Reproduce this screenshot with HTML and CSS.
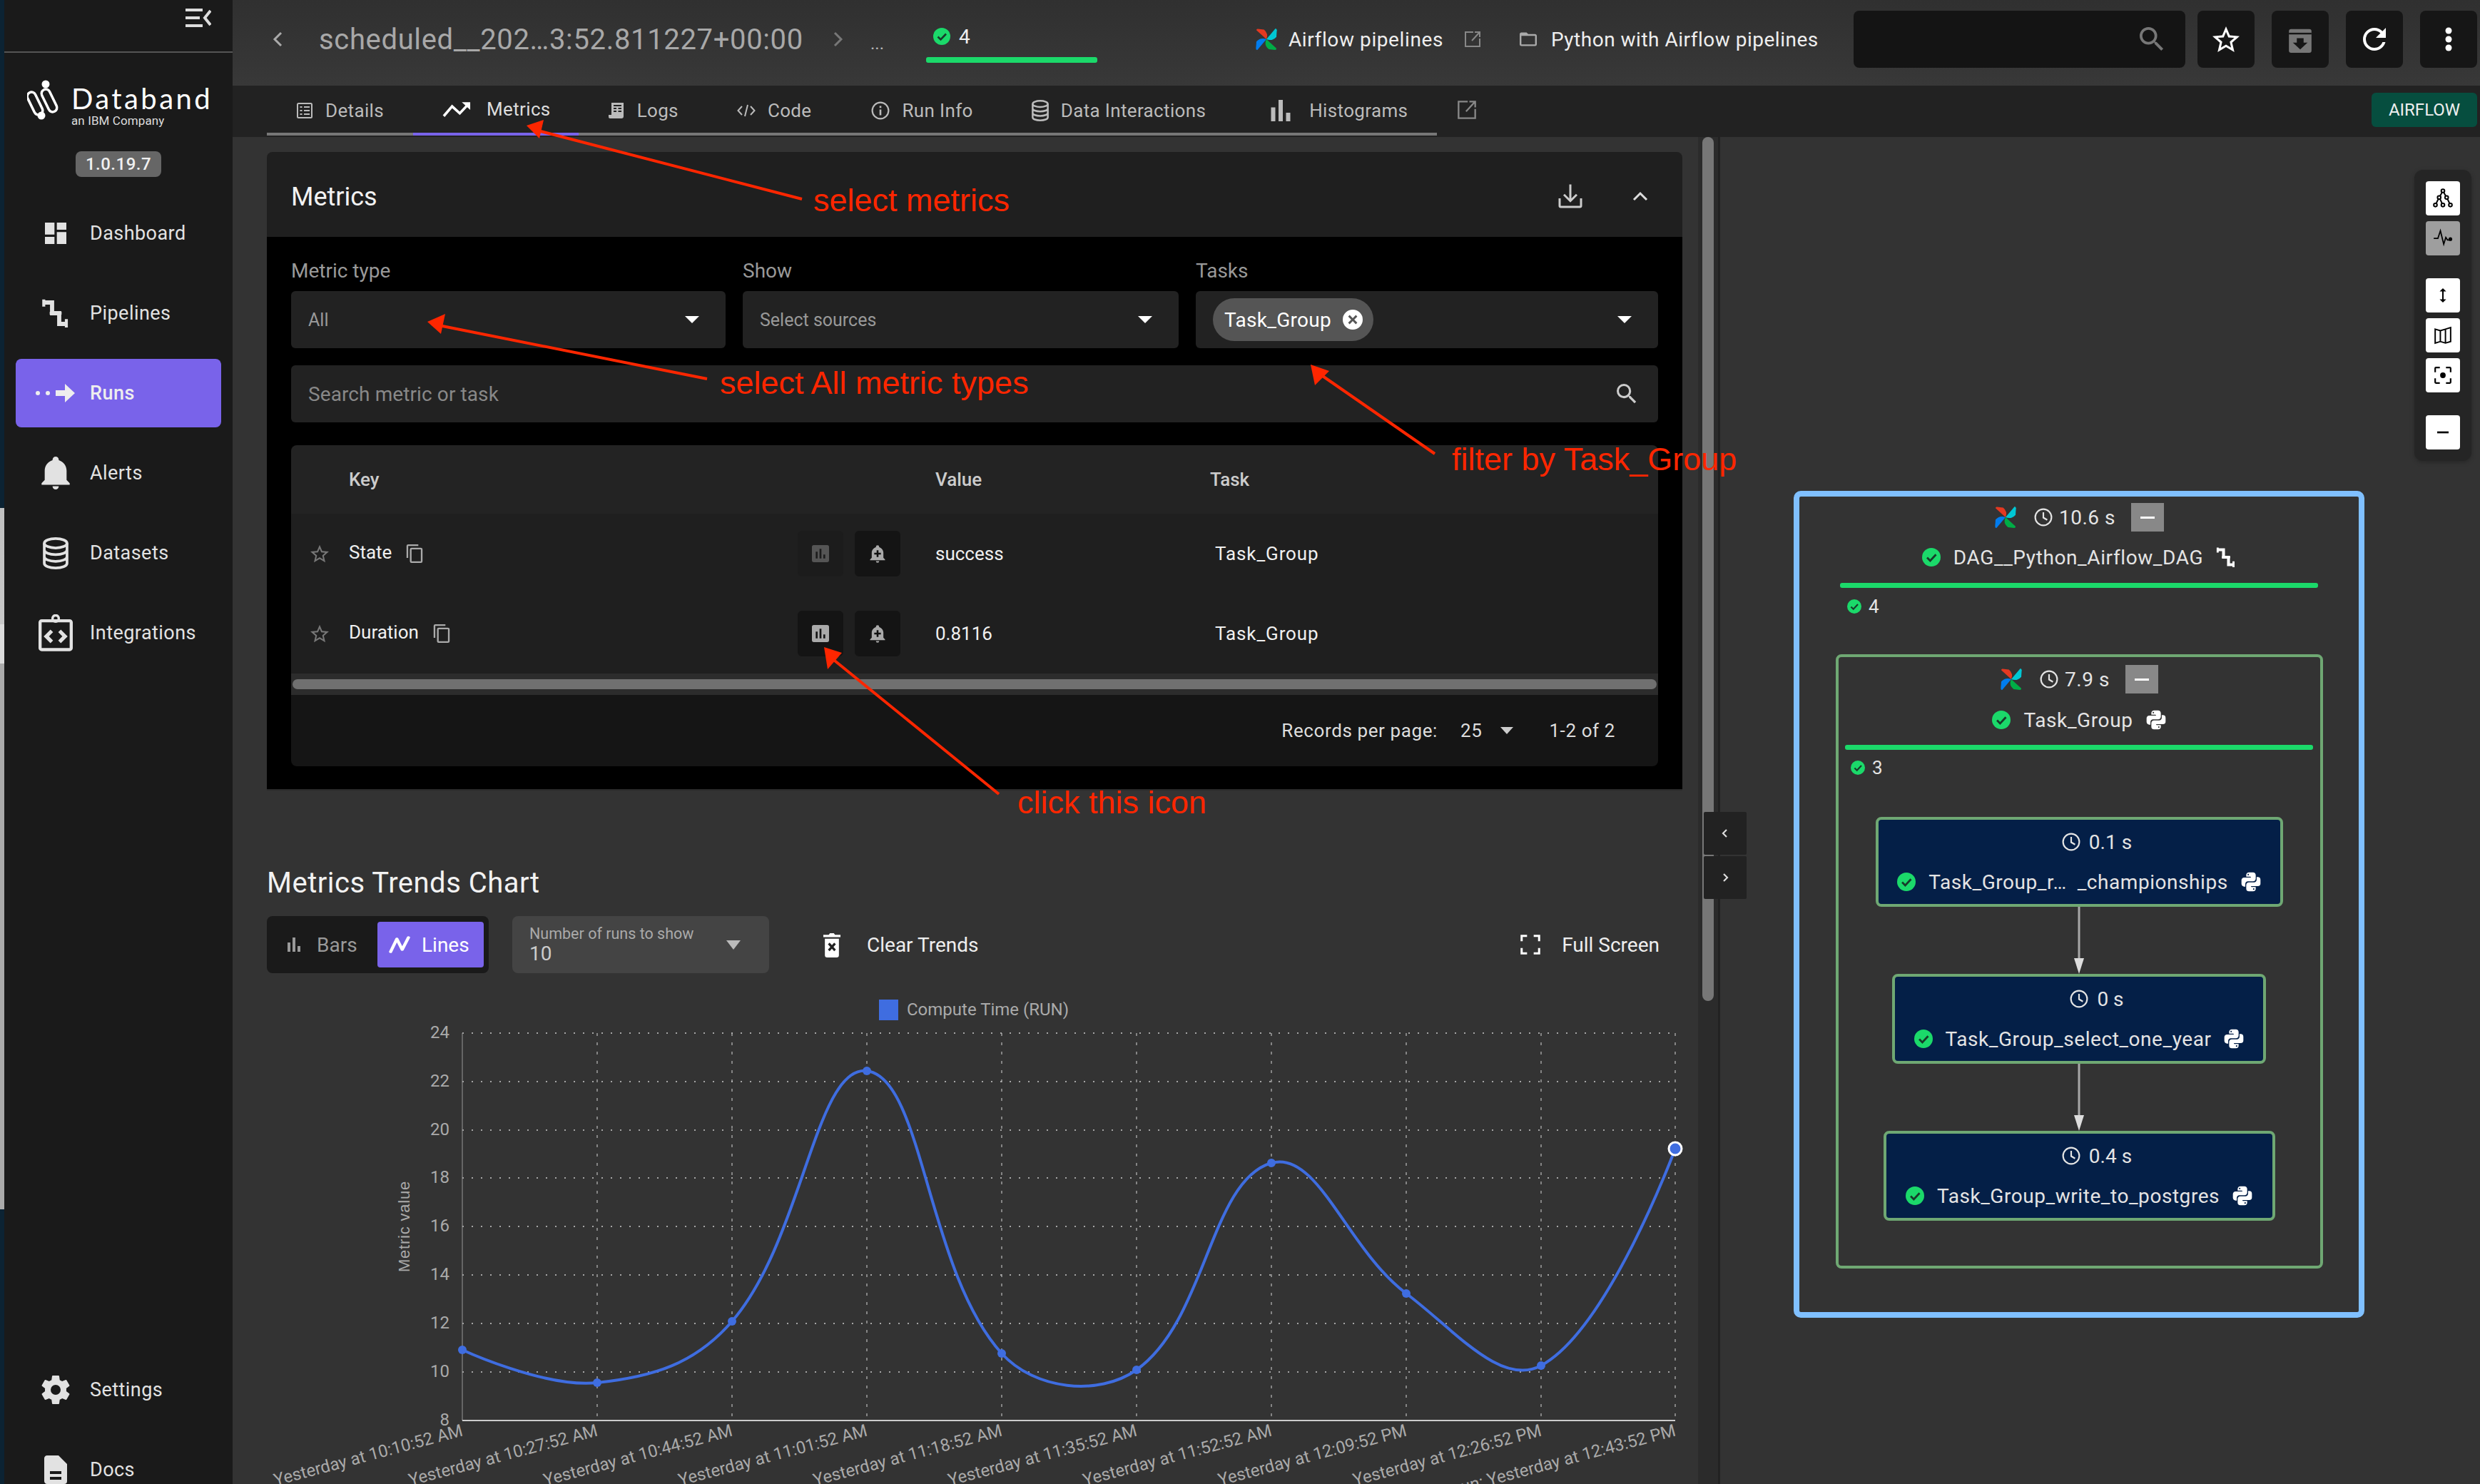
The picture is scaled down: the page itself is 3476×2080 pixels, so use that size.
FILE: index.html
```html
<!DOCTYPE html>
<html lang="en">
<head>
<meta charset="utf-8">
<title>Databand - Metrics</title>
<link rel="stylesheet" href="styles.css">
</head>
<body>
<svg class="sprite" width="0" height="0" aria-hidden="true">
  <defs>
    <symbol id="i-check" viewBox="0 0 24 24"><circle cx="12" cy="12" r="12" fill="#1bd96a"/><path d="M6.500 12.500l4 4 7.500-8" fill="none" stroke="#173a2a" stroke-width="2.600"/></symbol>
    <symbol id="i-airflow" viewBox="0 0 24 24">
      <path fill="#e43921" d="M12 12 1.500 2.500Q1.500 1 3 1.200L9.500 1.800Q14.500 6 12 12Z"/>
      <path fill="#00c7d4" d="M12 12 21.500 .8Q23 1 23 2.500L22.500 9.500Q18 14.500 12 12Z"/>
      <path fill="#00ad46" d="M12 12 22.500 21.500Q22.500 23.500 21 23.200L14.500 22.500Q9 18 12 12Z"/>
      <path fill="#017cee" d="M12 12 2.500 23.200Q1 23.500 1 21.500L1.500 14.500Q6 9.500 12 12Z"/>
    </symbol>
    <symbol id="i-python" viewBox="2 2 20 21"><path fill="#fff" d="M19.140 7.500A2.860 2.860 0 0 1 22 10.360V14.140A2.860 2.860 0 0 1 19.140 17H12C12 17.390 12.320 17.960 12.710 17.960H17V19.640A2.860 2.860 0 0 1 14.140 22.500H9.860A2.860 2.860 0 0 1 7 19.640V15.890C7 14.310 8.280 13.040 9.860 13.040H15.110C16.690 13.040 17.960 11.760 17.960 10.180V7.500H19.140M14.860 19.290C14.460 19.290 14.140 19.590 14.140 20.180C14.140 20.770 14.460 20.890 14.860 20.890A.71 .71 0 0 0 15.570 20.180C15.570 19.590 15.250 19.290 14.860 19.290M4.860 17.500C3.280 17.500 2 16.220 2 14.640V10.860C2 9.280 3.280 8 4.860 8H12C12 7.610 11.680 7.040 11.290 7.040H7V5.360C7 3.780 8.280 2.500 9.860 2.500H14.140C15.720 2.500 17 3.780 17 5.360V9.110C17 10.690 15.720 11.960 14.140 11.960H8.890C7.310 11.960 6.040 13.240 6.040 14.820V17.500H4.860M9.140 5.710C9.540 5.710 9.860 5.410 9.860 4.820C9.860 4.230 9.540 4.110 9.140 4.110C8.750 4.110 8.430 4.230 8.430 4.820C8.430 5.410 8.750 5.710 9.140 5.710Z"/></symbol>
    <symbol id="i-clock" viewBox="0 0 24 24"><circle cx="12" cy="12" r="10.500" fill="none" stroke="currentColor" stroke-width="2"/><path d="M12 5.500v7l5 3" fill="none" stroke="currentColor" stroke-width="2"/></symbol>
    <symbol id="i-pipe" viewBox="0 0 24 24"><path d="M2 3h7v9h6v9h6" fill="none" stroke="currentColor" stroke-width="3.500"/><path d="M2 .5v6M21 17v7M7 12h10" fill="none" stroke="currentColor" stroke-width="2.500"/></symbol>
    <symbol id="i-dash" viewBox="3 3 18 18"><path fill="currentColor" d="M13 3V9H21V3M13 21H21V11H13M3 21H11V15H3M3 13H11V3H3V13Z"/></symbol>
    <symbol id="i-bell" viewBox="3 2 18 21"><path fill="currentColor" d="M21 19V20H3V19L5 17V11C5 7.900 7.030 5.170 10 4.290C10 4.190 10 4.100 10 4A2 2 0 0 1 12 2A2 2 0 0 1 14 4C14 4.100 14 4.190 14 4.290C16.970 5.170 19 7.900 19 11V17L21 19M14 21A2 2 0 0 1 12 23A2 2 0 0 1 10 21"/></symbol>
    <symbol id="i-bellplus" viewBox="0 0 24 24"><path fill="currentColor" d="M21 19V20H3V19L5 17V11C5 7.900 7.030 5.170 10 4.290C10 4.190 10 4.100 10 4A2 2 0 0 1 12 2A2 2 0 0 1 14 4C14 4.100 14 4.190 14 4.290C16.970 5.170 19 7.900 19 11V17L21 19M14 21A2 2 0 0 1 12 23A2 2 0 0 1 10 21"/><path d="M12 8v8M8 12h8" stroke="#111" stroke-width="2.200"/></symbol>
    <symbol id="i-db" viewBox="2.500 0 19 24"><g fill="none" stroke="currentColor" stroke-width="2"><ellipse cx="12" cy="4.500" rx="8.500" ry="3.500"/><path d="M3.500 4.500v15c0 2 3.800 3.500 8.500 3.500s8.500-1.500 8.500-3.500v-15M3.500 9.500c0 2 3.800 3.500 8.500 3.500s8.500-1.500 8.500-3.500M3.500 14.500c0 2 3.800 3.500 8.500 3.500s8.500-1.500 8.500-3.500"/></g></symbol>
    <symbol id="i-integr" viewBox="1 .5 22 23.500"><path d="M3 4.500h18a1 1 0 0 1 1 1V22a1 1 0 0 1-1 1H3a1 1 0 0 1-1-1V5.500a1 1 0 0 1 1-1z" fill="none" stroke="currentColor" stroke-width="2"/><circle cx="12" cy="3" r="2" fill="none" stroke="currentColor" stroke-width="1.600"/><path d="M9.500 11l-3.500 3.500 3.500 3.500M14.500 11l3.500 3.500-3.500 3.500" fill="none" stroke="currentColor" stroke-width="2.400"/></symbol>
    <symbol id="i-cog" viewBox="2 2 20 20"><path fill="currentColor" d="M12 15.500A3.500 3.500 0 0 1 8.500 12A3.500 3.500 0 0 1 12 8.500A3.500 3.500 0 0 1 15.500 12A3.500 3.500 0 0 1 12 15.500M19.430 12.970C19.470 12.650 19.500 12.330 19.500 12C19.500 11.670 19.470 11.340 19.430 11L21.540 9.370C21.730 9.220 21.780 8.950 21.660 8.730L19.660 5.270C19.540 5.050 19.270 4.960 19.050 5.050L16.560 6.050C16.040 5.660 15.500 5.320 14.870 5.070L14.500 2.420C14.460 2.180 14.250 2 14 2H10C9.750 2 9.540 2.180 9.500 2.420L9.130 5.070C8.500 5.320 7.960 5.660 7.440 6.050L4.950 5.050C4.730 4.960 4.460 5.050 4.340 5.270L2.340 8.730C2.210 8.950 2.270 9.220 2.460 9.370L4.570 11C4.530 11.340 4.500 11.670 4.500 12C4.500 12.330 4.530 12.650 4.570 12.970L2.460 14.630C2.270 14.780 2.210 15.050 2.340 15.270L4.340 18.730C4.460 18.950 4.730 19.030 4.950 18.950L7.440 17.940C7.960 18.340 8.500 18.680 9.130 18.930L9.500 21.580C9.540 21.820 9.750 22 10 22H14C14.250 22 14.460 21.820 14.500 21.580L14.870 18.930C15.500 18.670 16.040 18.340 16.560 17.940L19.050 18.950C19.270 19.030 19.540 18.950 19.660 18.730L21.660 15.270C21.780 15.050 21.730 14.780 21.540 14.630L19.430 12.970Z"/></symbol>
    <symbol id="i-doc" viewBox="4 2 16 20"><path fill="currentColor" fill-rule="evenodd" d="M6 2H14L20 8V20A2 2 0 0 1 18 22H6C4.890 22 4 21.100 4 20V4C4 2.890 4.890 2 6 2ZM8 13V15H16V13ZM8 17V19H16V17Z"/></symbol>
    <symbol id="i-search" viewBox="3 3 18 18"><path fill="currentColor" d="M9.500 3A6.500 6.500 0 0 1 16 9.500C16 11.110 15.410 12.590 14.440 13.730L14.710 14H15.500L20.500 19L19 20.500L14 15.500V14.710L13.730 14.440C12.590 15.410 11.110 16 9.500 16A6.500 6.500 0 0 1 3 9.500A6.500 6.500 0 0 1 9.500 3M9.500 5C7 5 5 7 5 9.500C5 12 7 14 9.500 14C12 14 14 12 14 9.500C14 7 12 5 9.500 5Z"/></symbol>
    <symbol id="i-star" viewBox="2 2 20 19"><path fill="currentColor" d="M12 15.390L8.240 17.660L9.230 13.380L5.910 10.500L10.290 10.130L12 6.090L13.710 10.130L18.090 10.500L14.770 13.380L15.760 17.660M22 9.240L14.810 8.630L12 2L9.190 8.620L2 9.240L7.450 13.970L5.820 21L12 17.270L18.180 21L16.540 13.970L22 9.240Z"/></symbol>
    <symbol id="i-refresh" viewBox="4 4 16 16"><path fill="currentColor" d="M17.650 6.350C16.200 4.900 14.210 4 12 4A8 8 0 0 0 4 12A8 8 0 0 0 12 20C15.730 20 18.840 17.450 19.730 14H17.650C16.830 16.330 14.610 18 12 18A6 6 0 0 1 6 12A6 6 0 0 1 12 6C13.660 6 15.140 6.690 16.220 7.780L13 11H20V4L17.650 6.350Z"/></symbol>
    <symbol id="i-dots" viewBox="0 0 24 24"><circle cx="12" cy="4" r="3" fill="currentColor"/><circle cx="12" cy="12" r="3" fill="currentColor"/><circle cx="12" cy="20" r="3" fill="currentColor"/></symbol>
    <symbol id="i-archive" viewBox="0 0 24 24"><path fill="currentColor" d="M4 3h16a2 2 0 0 1 2 2v17a2 2 0 0 1-2 2H4a2 2 0 0 1-2-2V5a2 2 0 0 1 2-2z"/><path d="M2 7h20" stroke="#161616" stroke-width="1.500"/><path d="M9 11h6v4h3.500L12 21l-6.500-6H9z" fill="#161616"/></symbol>
    <symbol id="i-ext" viewBox="0 0 24 24"><path d="M13 2H2v20h20V11M22 2 11 14M15 2h7v7" fill="none" stroke="currentColor" stroke-width="2"/></symbol>
    <symbol id="i-folder" viewBox="2 4 20 16"><path fill="currentColor" d="M20 18H4V8H20M20 6H12L10 4H4C2.890 4 2 4.890 2 6V18A2 2 0 0 0 4 20H20A2 2 0 0 0 22 18V8C22 6.890 21.100 6 20 6Z"/></symbol>
    <symbol id="i-details" viewBox="0 0 24 24"><rect x="2" y="2" width="20" height="20" rx="1.500" fill="none" stroke="currentColor" stroke-width="2"/><path d="M5.500 7h3M5.500 12h3M5.500 17h3M11 7h8M11 12h8M11 17h8" stroke="currentColor" stroke-width="2.200"/></symbol>
    <symbol id="i-trend" viewBox="0 0 42 24"><path d="M2 22 14 8l11 10L38 4" fill="none" stroke="#fff" stroke-width="3.600"/><path d="M28 2h12v11z" fill="#fff"/></symbol>
    <symbol id="i-logs" viewBox="0 0 24 24"><path fill="currentColor" d="M5 1h17v19a3 3 0 0 1-3 3H3a2 2 0 0 1-2-2v-3h4z"/><path d="M8 5h11M8 9h4M14.500 9H19M8 13h4M14.500 13H19" stroke="#222" stroke-width="2"/></symbol>
    <symbol id="i-code" viewBox="0 0 26 24"><path d="M7 6 1.500 12 7 18M19 6l5.500 6-5.500 6M15 4l-4 16" fill="none" stroke="currentColor" stroke-width="2"/></symbol>
    <symbol id="i-info" viewBox="0 0 24 24"><circle cx="12" cy="12" r="10.500" fill="none" stroke="currentColor" stroke-width="2"/><path d="M12 10.500V18M12 6v2.500" stroke="currentColor" stroke-width="2.400"/></symbol>
    <symbol id="i-bars" viewBox="3 2 18 20"><path fill="currentColor" d="M3 22V9H7V22H3M10 22V2H14V22H10M17 22V14H21V22H17Z"/></symbol>
    <symbol id="i-poll" viewBox="3 3 18 18"><path fill="currentColor" fill-rule="evenodd" d="M5 3H19A2 2 0 0 1 21 5V19A2 2 0 0 1 19 21H5A2 2 0 0 1 3 19V5A2 2 0 0 1 5 3ZM7 10V17H9V10ZM11 7V17H13V7ZM15 13V17H17V13Z"/></symbol>
    <symbol id="i-copy" viewBox="2 1 19 22"><path fill="currentColor" d="M19 21H8V7H19M19 5H8A2 2 0 0 0 6 7V21A2 2 0 0 0 8 23H19A2 2 0 0 0 21 21V7A2 2 0 0 0 19 5M16 1H4A2 2 0 0 0 2 3V17H4V3H16V1Z"/></symbol>
    <symbol id="i-down" viewBox="0 0 24 24"><path d="M12 1v15M6 10.500l6 6 6-6M2 14v7a1 1 0 0 0 1 1h18a1 1 0 0 0 1-1v-7" fill="none" stroke="currentColor" stroke-width="2"/></symbol>
    <symbol id="i-closec" viewBox="0 0 24 24"><path fill="#fff" fill-rule="evenodd" d="M12 0a12 12 0 1 1 0 24 12 12 0 0 1 0-24zM8.300 6.500 6.500 8.300 10.200 12l-3.700 3.700 1.800 1.800 3.700-3.700 3.700 3.700 1.800-1.800-3.700-3.700 3.700-3.700-1.800-1.800-3.700 3.700z"/></symbol>
    <symbol id="i-lines" viewBox="0 0 24 24" preserveAspectRatio="none"><path d="M2 22 9 4l6 15L22 2" fill="none" stroke="#fff" stroke-width="3.500" stroke-linejoin="round" stroke-linecap="round"/></symbol>
    <symbol id="i-trash" viewBox="0 0 24 32"><path fill="#fff" d="M1 3h7l1.500-2h5L16 3h7v3H1zM3 8h18v21a3 3 0 0 1-3 3H6a3 3 0 0 1-3-3z"/><path d="M8 14l8 9M16 14l-8 9" stroke="#222" stroke-width="3"/></symbol>
    <symbol id="i-frame" viewBox="0 0 24 24"><path d="M1.500 8V1.500H8M16 1.500h6.500V8M22.500 16v6.500H16M8 22.500H1.500V16" fill="none" stroke="#fff" stroke-width="2.600"/></symbol>
    <symbol id="i-tree" viewBox="0 0 24 24"><g fill="none" stroke="#000" stroke-width="1.700"><circle cx="12" cy="3" r="2"/><circle cx="7.500" cy="11" r="2"/><circle cx="16.500" cy="11" r="2"/><circle cx="3" cy="20" r="2"/><circle cx="12" cy="20" r="2"/><circle cx="21" cy="20" r="2"/><path d="M11 5 8.500 9.200M13 5l2.500 4.200M6.500 12.800 4 18M8.500 12.800 11 18M17.500 12.800 20 18"/></g></symbol>
    <symbol id="i-pulse" viewBox="0 0 24 24"><path d="M1 12h5l3-9 4 16 2.500-8 2 3h3" fill="none" stroke="#000" stroke-width="1.500"/><circle cx="21" cy="13" r="2.200" fill="#000"/></symbol>
    <symbol id="i-updown" viewBox="0 0 24 24"><path d="M12 3v18" stroke="#000" stroke-width="2.200"/><path d="M12 1l5 5H7zM12 23l-5-5h10z" fill="#000"/></symbol>
    <symbol id="i-map" viewBox="0 0 24 24"><path d="M2 4l6.700 2 6.600-2L22 2v18l-6.700 2-6.600-2L2 22zM8.700 6v14M15.300 4v18" fill="none" stroke="#000" stroke-width="1.800"/></symbol>
    <symbol id="i-focus" viewBox="0 0 24 24"><path d="M2 8V3a1 1 0 0 1 1-1h5M16 2h5a1 1 0 0 1 1 1v5M22 16v5a1 1 0 0 1-1 1h-5M8 22H3a1 1 0 0 1-1-1v-5" fill="none" stroke="#000" stroke-width="2"/><circle cx="12" cy="12" r="3.600" fill="#000"/></symbol>
    <symbol id="i-arrow" viewBox="0 0 20 94"><path d="M10 0V72" stroke="#a8a8a8" stroke-width="3"/><path d="M3 72H17L10 94z" fill="#ddd"/></symbol>
  </defs>
</svg>

<div class="strip"></div>

<aside class="sidebar">
  <div class="side-top">
    <svg class="collapse" viewBox="0 0 36 26"><path d="M0 2h24M0 13h20M0 24h24M35 3 27 13l8 10" fill="none" stroke="#ddd" stroke-width="4"/></svg>
  </div>
  <div class="brand">
    <svg class="brand-mark" viewBox="0 0 46 56">
      <g fill="none" stroke="#fff" stroke-width="3.500"><rect x="5" y="16" width="12" height="34" rx="6" transform="rotate(-26 11 33)"/><rect x="25" y="12" width="12" height="34" rx="6" transform="rotate(-26 31 29)"/></g>
      <circle cx="26" cy="6" r="5.500" fill="#fff"/><circle cx="20" cy="50" r="5.500" fill="#fff"/>
    </svg>
    <div class="brand-text">
      <div class="brand-name">Databand</div>
      <div class="brand-sub">an IBM Company</div>
    </div>
  </div>
  <div class="version">1.0.19.7</div>
  <nav class="nav">
    <a class="nav-item"><span class="nav-icon"><svg class="ic-30"><use href="#i-dash"/></svg></span>Dashboard</a>
    <a class="nav-item"><span class="nav-icon"><svg class="ic-40"><use href="#i-pipe"/></svg></span>Pipelines</a>
    <a class="nav-item nav-active"><span class="nav-icon"><svg class="runs-ic" viewBox="0 0 56 26"><circle cx="3" cy="13" r="3" fill="#eee"/><circle cx="17" cy="13" r="3" fill="#eee"/><path d="M28 9h13V0l14 13-14 13v-9H28z" fill="#eee"/></svg></span>Runs</a>
    <a class="nav-item"><span class="nav-icon"><svg class="ic-46"><use href="#i-bell"/></svg></span>Alerts</a>
    <a class="nav-item"><span class="nav-icon"><svg class="ic-db-nav"><use href="#i-db"/></svg></span>Datasets</a>
    <a class="nav-item"><span class="nav-icon"><svg class="ic-integr"><use href="#i-integr"/></svg></span>Integrations</a>
  </nav>
  <nav class="nav nav-bottom">
    <a class="nav-item"><span class="nav-icon"><svg class="ic-40"><use href="#i-cog"/></svg></span>Settings</a>
    <a class="nav-item"><span class="nav-icon"><svg class="ic-40"><use href="#i-doc"/></svg></span>Docs</a>
  </nav>
</aside>

<main class="main">
  <header class="topbar">
    <svg class="chev-back" viewBox="0 0 14 22"><path d="M12 2 3 11l9 9" fill="none" stroke="#aaa" stroke-width="3"/></svg>
    <div class="title">scheduled__202…3:52.811227+00:00</div>
    <svg class="chev-next" viewBox="0 0 14 22"><path d="M2 2l9 9-9 9" fill="none" stroke="#777" stroke-width="3"/></svg>
    <div class="ellipsis">...</div>
    <div class="status">
      <div class="status-row"><svg class="ic-24"><use href="#i-check"/></svg><span>4</span></div>
      <div class="status-bar"></div>
    </div>
    <svg class="af-logo"><use href="#i-airflow"/></svg>
    <div class="top-link top-link-a">Airflow pipelines</div>
    <svg class="ext-top"><use href="#i-ext"/></svg>
    <svg class="folder"><use href="#i-folder"/></svg>
    <div class="top-link top-link-b">Python with Airflow pipelines</div>
    <div class="top-search"><svg class="ic-34 dim"><use href="#i-search"/></svg></div>
    <div class="top-btn"><svg class="ic-38 white"><use href="#i-star"/></svg></div>
    <div class="top-btn"><svg class="ic-38 dim"><use href="#i-archive"/></svg></div>
    <div class="top-btn"><svg class="ic-32 white"><use href="#i-refresh"/></svg></div>
    <div class="top-btn"><svg class="ic-36 white"><use href="#i-dots"/></svg></div>
  </header>

  <div class="tabbar">
    <div class="tabs">
      <a class="tab"><svg class="ic-24"><use href="#i-details"/></svg>Details</a>
      <a class="tab tab-active"><svg class="ic-trend"><use href="#i-trend"/></svg>Metrics</a>
      <a class="tab"><svg class="ic-24"><use href="#i-logs"/></svg>Logs</a>
      <a class="tab tab-code"><svg class="ic-26"><use href="#i-code"/></svg>Code</a>
      <a class="tab"><svg class="ic-26"><use href="#i-info"/></svg>Run Info</a>
      <a class="tab tab-data"><svg class="ic-db-tab"><use href="#i-db"/></svg>Data Interactions</a>
      <a class="tab tab-hist"><svg class="ic-bars"><use href="#i-bars"/></svg>Histograms</a>
    </div>
    <svg class="ext-tab"><use href="#i-ext"/></svg>
    <div class="engine">AIRFLOW</div>
  </div>

  <div class="content">
    <section class="left">
      <div class="panel">
        <div class="panel-head">
          <h2 class="panel-title">Metrics</h2>
          <svg class="ic-36 light"><use href="#i-down"/></svg>
          <svg class="chev-up" viewBox="0 0 24 14"><path d="M3 12l9-9 9 9" fill="none" stroke="#ddd" stroke-width="3"/></svg>
        </div>
        <div class="panel-body">
          <div class="filters">
            <div class="filter">
              <label class="filter-label">Metric type</label>
              <div class="select"><span>All</span><i class="caret"></i></div>
            </div>
            <div class="filter">
              <label class="filter-label">Show</label>
              <div class="select"><span>Select sources</span><i class="caret"></i></div>
            </div>
            <div class="filter">
              <label class="filter-label">Tasks</label>
              <div class="select select-chip"><span class="chip">Task_Group<svg class="ic-28"><use href="#i-closec"/></svg></span><i class="caret"></i></div>
            </div>
          </div>
          <div class="search"><span>Search metric or task</span><svg class="ic-28 light"><use href="#i-search"/></svg></div>
          <div class="table">
            <div class="thead">
              <span class="th">Key</span>
              <span class="th">Value</span>
              <span class="th th-task">Task</span>
            </div>
            <div class="tr">
              <svg class="row-star"><use href="#i-star"/></svg>
              <div class="key"><span class="key-name">State</span><svg class="ic-copy"><use href="#i-copy"/></svg>
                <div class="row-actions">
                  <span class="act act-off"><svg class="ic-24"><use href="#i-poll"/></svg></span>
                  <span class="act"><svg class="ic-28 bell-ic"><use href="#i-bellplus"/></svg></span>
                </div>
              </div>
              <span class="val">success</span>
              <span class="val val-task">Task_Group</span>
            </div>
            <div class="tr">
              <svg class="row-star"><use href="#i-star"/></svg>
              <div class="key"><span class="key-name">Duration</span><svg class="ic-copy"><use href="#i-copy"/></svg>
                <div class="row-actions">
                  <span class="act"><svg class="ic-24 bell-ic"><use href="#i-poll"/></svg></span>
                  <span class="act"><svg class="ic-28 bell-ic"><use href="#i-bellplus"/></svg></span>
                </div>
              </div>
              <span class="val">0.8116</span>
              <span class="val val-task">Task_Group</span>
            </div>
            <div class="hscroll"><div class="hthumb"></div></div>
            <div class="tfoot">
              <span>Records per page:</span>
              <span class="rpp">25</span>
              <i class="caret caret-sm"></i>
              <span class="range">1-2 of 2</span>
            </div>
          </div>
        </div>
      </div>

      <h2 class="chart-title">Metrics Trends Chart</h2>
      <div class="chart-controls">
        <div class="seg">
          <span class="seg-btn"><svg class="ic-20"><use href="#i-bars"/></svg>Bars</span>
          <span class="seg-btn seg-on"><svg class="ic-lines"><use href="#i-lines"/></svg>Lines</span>
        </div>
        <div class="runs-select">
          <div><div class="runs-label">Number of runs to show</div><div class="runs-val">10</div></div>
          <i class="caret caret-dim"></i>
        </div>
        <div class="ctl-btn ctl-clear"><svg class="ic-trash"><use href="#i-trash"/></svg>Clear Trends</div>
        <div class="ctl-btn ctl-full"><svg class="ic-28"><use href="#i-frame"/></svg>Full Screen</div>
      </div>

      <svg class="chart" viewBox="326 1380 2054 700" width="2054" height="700">
        <rect x="1232" y="1401" width="27" height="29" fill="#3f6de0"/>
        <text class="c-legend" x="1271" y="1423">Compute Time (RUN)</text>

        <g class="c-gridh">
          <path d="M648 1448H2348M648 1516H2348M648 1584H2348M648 1651H2348M648 1719H2348M648 1787H2348M648 1855H2348M648 1923H2348"/>
        </g>
        <g class="c-gridv">
          <path d="M837 1448V1985M1026 1448V1985M1215 1448V1985M1404 1448V1985M1593 1448V1985M1782 1448V1985M1971 1448V1985M2160 1448V1985M2348 1448V1985"/>
        </g>
        <path class="c-axis-y" d="M648 1448V1991"/>
        <path class="c-axis-x" d="M648 1991H2348"/>

        <g class="c-ytick">
          <text x="630" y="1455">24</text><text x="630" y="1523">22</text><text x="630" y="1591">20</text><text x="630" y="1658">18</text><text x="630" y="1726">16</text><text x="630" y="1794">14</text><text x="630" y="1862">12</text><text x="630" y="1930">10</text><text x="630" y="1998">8</text>
        </g>
        <text class="c-ytitle" transform="translate(574 1719) rotate(-90)">Metric value</text>

        <path class="c-line" d="M648 1892C648 1892 763.900 1945.700 837 1938C915.100 1929.700 974.200 1911.900 1026 1852C1125.400 1737.100 1143 1492.400 1215 1501C1294.200 1510.400 1298.500 1780.100 1404 1897C1449.700 1947.700 1539.400 1957.900 1593 1920C1690.600 1851.100 1696.100 1654.300 1782 1630C1847.300 1611.500 1887.700 1750.400 1971 1813C2038.900 1864 2103.500 1944.400 2160 1914C2254.300 1863.200 2348 1610 2348 1610"/>
        <g class="c-pts">
          <circle cx="648" cy="1892" r="6"/><circle cx="837" cy="1938" r="6"/><circle cx="1026" cy="1852" r="6"/><circle cx="1215" cy="1501" r="6"/><circle cx="1404" cy="1897" r="6"/><circle cx="1593" cy="1920" r="6"/><circle cx="1782" cy="1630" r="6"/><circle cx="1971" cy="1813" r="6"/><circle cx="2160" cy="1914" r="6"/>
        </g>
        <circle class="c-hot" cx="2348" cy="1610" r="9"/>

        <g class="c-xtick">
          <text transform="translate(650 2012) rotate(-15)">Yesterday at 10:10:52 AM</text>
          <text transform="translate(839 2012) rotate(-15)">Yesterday at 10:27:52 AM</text>
          <text transform="translate(1028 2012) rotate(-15)">Yesterday at 10:44:52 AM</text>
          <text transform="translate(1217 2012) rotate(-15)">Yesterday at 11:01:52 AM</text>
          <text transform="translate(1406 2012) rotate(-15)">Yesterday at 11:18:52 AM</text>
          <text transform="translate(1595 2012) rotate(-15)">Yesterday at 11:35:52 AM</text>
          <text transform="translate(1784 2012) rotate(-15)">Yesterday at 11:52:52 AM</text>
          <text transform="translate(1973 2012) rotate(-15)">Yesterday at 12:09:52 PM</text>
          <text transform="translate(2162 2012) rotate(-15)">Yesterday at 12:26:52 PM</text>
          <text transform="translate(2350 2012) rotate(-15)">Last run: Yesterday at 12:43:52 PM</text>
        </g>
      </svg>
    </section>

    <div class="gutter"><div class="vthumb"></div></div>

    <section class="right">
      <div class="pager">
        <span class="pager-btn"><svg class="ic-14" viewBox="0 0 14 14"><path d="M9 2 4 7l5 5" fill="none" stroke="#ddd" stroke-width="2.200"/></svg></span>
        <span class="pager-btn"><svg class="ic-14" viewBox="0 0 14 14"><path d="M5 2l5 5-5 5" fill="none" stroke="#ddd" stroke-width="2.200"/></svg></span>
      </div>

      <div class="toolbar">
        <span class="tool"><svg class="ic-28"><use href="#i-tree"/></svg></span>
        <span class="tool tool-on"><svg class="ic-28"><use href="#i-pulse"/></svg></span>
        <span class="tool tool-gap"><svg class="ic-22"><use href="#i-updown"/></svg></span>
        <span class="tool"><svg class="ic-26"><use href="#i-map"/></svg></span>
        <span class="tool"><svg class="ic-26"><use href="#i-focus"/></svg></span>
        <span class="tool tool-gap"><svg class="ic-minus" viewBox="0 0 18 4"><path d="M0 2h18" stroke="#000" stroke-width="3"/></svg></span>
      </div>

      <div class="dag">
        <div class="dag-time">
          <svg class="ic-32"><use href="#i-airflow"/></svg>
          <svg class="ic-26"><use href="#i-clock"/></svg><span>10.6 s</span>
          <span class="minus"></span>
        </div>
        <div class="dag-name dag-name-a">
          <svg class="ic-26"><use href="#i-check"/></svg><span>DAG__Python_Airflow_DAG</span><svg class="ic-28 white"><use href="#i-pipe"/></svg>
        </div>
        <div class="dag-bar"></div>
        <div class="dag-count"><svg class="ic-20"><use href="#i-check"/></svg><span>4</span></div>

        <div class="group">
          <div class="dag-time group-time">
            <svg class="ic-32"><use href="#i-airflow"/></svg>
            <svg class="ic-26"><use href="#i-clock"/></svg><span>7.9 s</span>
            <span class="minus"></span>
          </div>
          <div class="dag-name group-name">
            <svg class="ic-26"><use href="#i-check"/></svg><span>Task_Group</span><svg class="ic-28"><use href="#i-python"/></svg>
          </div>
          <div class="dag-bar group-bar"></div>
          <div class="dag-count group-count"><svg class="ic-20"><use href="#i-check"/></svg><span>3</span></div>

          <div class="node node-a">
            <div class="node-time"><svg class="ic-26"><use href="#i-clock"/></svg><span>0.1 s</span></div>
            <div class="node-name"><svg class="ic-26"><use href="#i-check"/></svg><span>Task_Group_r…  _championships</span><svg class="ic-28"><use href="#i-python"/></svg></div>
          </div>
          <svg class="edge"><use href="#i-arrow"/></svg>
          <div class="node node-b">
            <div class="node-time"><svg class="ic-26"><use href="#i-clock"/></svg><span>0 s</span></div>
            <div class="node-name"><svg class="ic-26"><use href="#i-check"/></svg><span>Task_Group_select_one_year</span><svg class="ic-28"><use href="#i-python"/></svg></div>
          </div>
          <svg class="edge"><use href="#i-arrow"/></svg>
          <div class="node node-c">
            <div class="node-time"><svg class="ic-26"><use href="#i-clock"/></svg><span>0.4 s</span></div>
            <div class="node-name"><svg class="ic-26"><use href="#i-check"/></svg><span>Task_Group_write_to_postgres</span><svg class="ic-28"><use href="#i-python"/></svg></div>
          </div>
        </div>
      </div>
    </section>
  </div>
</main>

<svg class="anno" viewBox="0 0 3476 2080" width="3476" height="2080">
  <g class="anno-lines">
    <path d="M1124 279 754 183"/>
    <path d="M991 531 615 456"/>
    <path d="M2011 636 1848 523"/>
    <path d="M1400 1113 1165 922"/>
  </g>
  <g class="anno-heads">
    <path d="M738 176 762 168 756 194z"/>
    <path d="M599 451 624 440 618 468z"/>
    <path d="M1837 511 1863 520 1843 540z"/>
    <path d="M1155 907 1180 915 1160 938z"/>
  </g>
  <text class="anno-text" x="1140" y="296">select metrics</text>
  <text class="anno-text" x="1009" y="552">select All metric types</text>
  <text class="anno-text" x="2035" y="659">filter by Task_Group</text>
  <text class="anno-text" x="1426" y="1140">click this icon</text>
</svg>
</body>
</html>
```

FILE: styles.css
```css
* { box-sizing: border-box; }
html, body { margin: 0; padding: 0; }
body {
  width: 3476px;
  height: 2080px;
  overflow: hidden;
  display: flex;
  position: relative;
  background: #333;
  color: #ddd;
  font-family: Roboto, "Liberation Sans", sans-serif;
  font-size: 28px;
}
svg { display: block; flex: none; }
.sprite { position: absolute; }
h2 { margin: 0; font-weight: 400; }

.ic-14 { width: 14px; height: 14px; }
.ic-20 { width: 20px; height: 20px; }
.ic-22 { width: 22px; height: 22px; }
.ic-24 { width: 24px; height: 24px; }
.ic-26 { width: 26px; height: 26px; }
.ic-28 { width: 28px; height: 28px; }
.ic-30 { width: 30px; height: 30px; }
.ic-32 { width: 32px; height: 32px; }
.ic-34 { width: 34px; height: 34px; }
.ic-36 { width: 36px; height: 36px; }
.ic-38 { width: 38px; height: 38px; }
.ic-40 { width: 40px; height: 40px; }
.ic-46 { width: 46px; height: 46px; }
.ic-db-nav { width: 36px; height: 45px; }
.ic-db-tab { width: 24px; height: 30px; }
.ic-integr { width: 48px; height: 52px; }
.white { color: #fff; }
.dim { color: #777; }
.light { color: #ccc; }

.strip {
  width: 6px;
  flex: none;
  background: linear-gradient(#0c2333 0, #0c2333 712px, #c0c0c0 712px, #c8c8c8 875px, #dcdcdc 875px, #dcdcdc 930px, #aaa 930px, #aaa 1695px, #0c2333 1695px);
}

/* sidebar */
.sidebar {
  width: 320px;
  flex: none;
  height: 2080px;
  background: #1a1a1a;
  display: flex;
  flex-direction: column;
  overflow: hidden;
}
.side-top {
  height: 74px;
  flex: none;
  border-bottom: 2px solid #555;
  display: flex;
  justify-content: flex-end;
  padding: 12px 30px 0 0;
}
.collapse { width: 36px; height: 26px; }
.brand {
  flex: none;
  display: flex;
  margin-top: 38px;
  padding-left: 32px;
  gap: 16px;
  height: 60px;
}
.brand-mark { width: 46px; height: 56px; }
.brand-text { padding-top: 5px; }
.brand-name {
  font-family: Lato, Roboto, sans-serif;
  font-size: 40px;
  line-height: 42px;
  letter-spacing: 3.4px;
  color: #fff;
  font-weight: 400;
}
.brand-sub { font-size: 17px; line-height: 20px; color: #ddd; letter-spacing: .1px; }
.version {
  flex: none;
  align-self: center;
  margin-top: 40px;
  width: 120px;
  height: 36px;
  background: #666;
  border-radius: 8px;
  color: #f0f0f0;
  font-size: 24px;
  font-weight: 500;
  line-height: 36px;
  text-align: center;
  letter-spacing: .5px;
}
.nav { flex: none; margin: 31px 16px 0; display: flex; flex-direction: column; gap: 16px; }
.nav-bottom { margin-top: 965px; }
.nav-item {
  height: 96px;
  flex: none;
  display: flex;
  align-items: center;
  padding-left: 32px;
  gap: 24px;
  border-radius: 8px;
  color: #e2e2e2;
  font-size: 27px;
  letter-spacing: .45px;
}
.nav-active { background: #7963ea; color: #eee; font-weight: 500; }
.nav-icon { width: 48px; height: 48px; display: flex; align-items: center; justify-content: center; color: #e2e2e2; flex: none; }
.runs-ic { width: 56px; height: 26px; flex: none; }

/* top bar */
.main { flex: 1; min-width: 0; display: flex; flex-direction: column; height: 2080px; }
.topbar {
  height: 120px;
  flex: none;
  display: flex;
  align-items: center;
  background: linear-gradient(#303030, #383838);
  padding: 0 0 10px 56px;
}
.chev-back { width: 14px; height: 22px; }
.title { margin-left: 51px; width: 721px; font-size: 40px; color: #a8a8a8; white-space: nowrap; letter-spacing: .65px; }
.chev-next { width: 14px; height: 22px; }
.ellipsis { margin-left: 38px; width: 78px; color: #bbb; font-size: 24px; margin-top: 12px; }
.status { width: 240px; flex: none; align-self: flex-start; padding-top: 36px; }
.status-row { display: flex; align-items: center; gap: 12px; margin-left: 10px; height: 30px; font-size: 28px; color: #eee; }
.status-bar { height: 8px; border-radius: 3px; background: #1bd96a; margin-top: 14px; }
.af-logo { width: 32px; height: 32px; margin-left: 221px; }
.top-link { color: #eee; font-size: 28px; white-space: nowrap; }
.top-link-a { margin-left: 15px; width: 246px; letter-spacing: .6px; }
.ext-top { width: 24px; height: 26px; color: #888; }
.folder { width: 24px; height: 22px; color: #aaa; margin-left: 54px; }
.top-link-b { margin-left: 20px; width: 424px; letter-spacing: .5px; }
.top-search {
  width: 465px; height: 80px; flex: none;
  background: #141414; border-radius: 8px;
  display: flex; align-items: center; justify-content: flex-end;
  padding-right: 30px;
  margin-right: 17px;
}
.top-btn {
  width: 80px; height: 80px; flex: none;
  background: #161616; border-radius: 8px;
  display: flex; align-items: center; justify-content: center;
  margin-right: 24px;
}
.top-btn:last-child { margin-right: 0; }

/* tab bar */
.tabbar {
  height: 72px;
  flex: none;
  background: #222;
  display: flex;
  align-items: flex-start;
  padding-left: 48px;
  position: relative;
}
.tabs { display: flex; height: 70px; border-bottom: 4px solid #777; flex: none; }
.tab {
  display: flex;
  align-items: center;
  gap: 17px;
  padding: 0 41px;
  height: 70px;
  font-size: 26px;
  color: #bbb;
  letter-spacing: .35px;
  white-space: nowrap;
}
.tab-active { border-bottom: 4px solid #7963ea; color: #ddd; gap: 21px; padding-right: 39px; }
.tab-code { padding-right: 43px; }
.tab-data { padding-right: 50px; }
.tab-hist { gap: 26px; }
.ic-trend { width: 41px; height: 24px; }
.ic-bars { width: 28px; height: 30px; }
.ext-tab { width: 28px; height: 28px; color: #888; margin: 20px 0 0 28px; }
.engine {
  margin: 10px 4px 0 auto;
  width: 148px; height: 48px;
  background: #064e3f;
  border-radius: 6px;
  color: #eee;
  font-size: 24px;
  line-height: 48px;
  text-align: center;
}

/* content */
.content { flex: 1; display: flex; min-height: 0; }
.left { width: 2054px; flex: none; padding: 21px 22px 0 48px; overflow: hidden; }
.panel { width: 1984px; border-radius: 8px 8px 0 0; overflow: hidden; border-bottom: 2px solid #2a2a2a; }
.panel-head {
  height: 119px;
  background: #1f1f1f;
  display: flex;
  align-items: center;
  padding: 4px 47px 0 34px;
}
.panel-title { font-size: 36px; color: #f2f2f2; flex: 1; margin-top: 2px; }
.chev-up { width: 24px; height: 14px; margin-left: 68px; }
.panel-body { background: #000; padding: 32px 34px 32px; }
.filters { display: grid; grid-template-columns: 609px 611px 648px; gap: 24px; }
.filter-label { display: block; font-size: 28px; line-height: 32px; color: #999; margin-bottom: 12px; }
.select {
  height: 80px;
  background: #222;
  border-radius: 6px;
  display: flex;
  align-items: center;
  justify-content: space-between;
  padding: 0 37px 0 24px;
  color: #999;
  font-size: 25px;
}
.caret { width: 0; height: 0; border-left: 10px solid transparent; border-right: 10px solid transparent; border-top: 10px solid #fff; flex: none; }
.caret-sm { border-top-color: #ccc; }
.caret-dim { border-top-color: #bbb; border-top-width: 13px; }
.chip {
  height: 60px;
  padding: 0 15px 0 16px;
  display: flex;
  align-items: center;
  gap: 16px;
  background: #555;
  border-radius: 30px;
  color: #fff;
  font-size: 28px;
  letter-spacing: .3px;
}
.search {
  height: 80px;
  margin-top: 24px;
  background: #222;
  border-radius: 6px;
  display: flex;
  align-items: center;
  justify-content: space-between;
  padding: 0 30px 0 24px;
  color: #888;
  font-size: 28px;
  letter-spacing: .1px;
}
.table { margin-top: 32px; border-radius: 8px; overflow: hidden; }
.thead {
  height: 96px;
  background: #232323;
  display: grid;
  grid-template-columns: 903px 392px 1fr;
  align-items: center;
  padding-left: 81px;
}
.thead .th:nth-child(2) { margin-left: -81px; }
.th { font-size: 26px; font-weight: 500; color: #ccc; }
.th-task { margin-left: -88px; }
.tr {
  height: 112px;
  background: #1f1f1f;
  display: grid;
  grid-template-columns: 81px 822px 392px 1fr;
  align-items: center;
}
.row-star { width: 26px; height: 26px; color: #777; margin-left: 27px; }
.key { display: flex; align-items: center; gap: 20px; font-size: 26px; color: #f0f0f0; padding-right: 49px; }
.key-name { margin-bottom: 4px; }
.ic-copy { width: 24px; height: 26px; color: #aaa; }
.row-actions { margin-left: auto; display: flex; gap: 16px; }
.act { width: 64px; height: 64px; border-radius: 6px; background: #141414; display: flex; align-items: center; justify-content: center; }
.act-off { background: #1c1c1c; color: #555; }
.bell-ic { color: #aaa; }
.val { font-size: 26px; color: #f0f0f0; }
.val-task { letter-spacing: .9px; }
.hscroll { height: 30px; background: #2c2c2c; padding: 8px 2px; }
.hthumb { height: 14px; border-radius: 8px; background: #707070; }
.tfoot {
  height: 100px;
  background: #151515;
  display: flex;
  align-items: center;
  justify-content: flex-end;
  padding-right: 60px;
  font-size: 26px;
  letter-spacing: .6px;
  color: #ddd;
}
.rpp { margin-left: 32px; }
.caret-sm { margin-left: 26px; border-left-width: 9px; border-right-width: 9px; border-top-width: 10px; }
.range { margin-left: 50px; }

/* chart */
.chart-title { margin-top: 108px; height: 44px; font-size: 40px; line-height: 44px; color: #f2f2f2; letter-spacing: .5px; }
.chart-controls { margin-top: 24px; display: flex; align-items: center; height: 80px; width: 1952px; }
.seg { width: 311px; height: 80px; background: #1a1a1a; border-radius: 8px; display: flex; align-items: center; padding: 0 7px 0 28px; }
.seg-btn { display: flex; align-items: center; gap: 22px; font-size: 28px; color: #999; flex: 1; }
.seg-btn .ic-20 { color: #999; }
.seg-on { flex: none; width: 149px; height: 64px; background: #7963ea; color: #fff; border-radius: 4px; padding-left: 16px; gap: 16px; }
.ic-lines { width: 30px; height: 24px; }
.runs-select {
  margin-left: 33px; width: 360px; height: 80px;
  background: #444; border-radius: 8px;
  display: flex; align-items: center; justify-content: space-between;
  padding: 0 40px 0 24px;
}
.runs-label { font-size: 21.500px; line-height: 26px; color: #aaa; }
.runs-val { font-size: 28px; line-height: 30px; color: #ccc; }
.ctl-btn { display: flex; align-items: center; font-size: 28px; color: #eee; white-space: nowrap; }
.ctl-clear { margin-left: 74px; gap: 35px; }
.ic-trash { width: 28px; height: 35px; }
.ctl-full { margin-left: auto; gap: 30px; }
.chart { margin: 16px 0 0 -48px; }
.c-legend { font-size: 24px; fill: #aaa; }
.c-gridh path { stroke: #ccc; stroke-width: 1.500; stroke-dasharray: 2 11; fill: none; }
.c-gridv path { stroke: #bbb; stroke-width: 1.200; stroke-dasharray: 4 9; fill: none; }
.c-axis-y { stroke: #999; stroke-width: 1; }
.c-axis-x { stroke: #ccc; stroke-width: 2; }
.c-ytick text { font-size: 24px; fill: #aaa; text-anchor: end; }
.c-ytitle { font-family: "Liberation Sans", sans-serif; font-size: 22px; fill: #aaa; text-anchor: middle; letter-spacing: .8px; }
.c-line { fill: none; stroke: #3f6de0; stroke-width: 4; }
.c-pts circle { fill: #3f6de0; }
.c-hot { fill: #3f6de0; stroke: #fff; stroke-width: 3; }
.c-xtick text { font-size: 24px; fill: #aaa; text-anchor: end; }

/* gutter */
.gutter { width: 31px; flex: none; background: #2b2b2b; border-right: 3px solid #222; padding-left: 6px; }
.vthumb { width: 16px; height: 1211px; background: #777; border-radius: 8px; }

/* dag */
.right { flex: 1; position: relative; background: #333; }
.pager { position: absolute; left: -23px; top: 946px; display: flex; flex-direction: column; gap: 2px; }
.pager-btn { width: 60px; height: 60px; background: #222; display: flex; align-items: center; justify-content: center; border-radius: 2px; }
.toolbar {
  position: absolute;
  left: 973px; top: 46px;
  width: 80px; height: 408px;
  background: #252525;
  border-radius: 12px;
  padding: 16px;
  display: flex; flex-direction: column; gap: 8px;
  box-shadow: 0 2px 6px rgba(0,0,0,.25);
}
.tool { width: 48px; height: 48px; flex: none; border-radius: 4px; background: #fff; display: flex; align-items: center; justify-content: center; }
.tool-on { background: #9e9e9e; }
.tool-gap { margin-top: 24px; }
.ic-minus { width: 16px; height: 4px; }

.dag {
  position: absolute;
  left: 103px; top: 496px;
  width: 800px; height: 1159px;
  border: 8px solid #80c0ff;
  border-radius: 10px;
  display: flex; flex-direction: column; align-items: center;
  color: #e4e4e4;
}
.dag-time { display: flex; align-items: center; height: 40px; margin-top: 9px; font-size: 28px; letter-spacing: .5px; }
.dag-time .ic-26 { margin-left: 24px; margin-right: 9px; }
.minus { width: 46px; height: 40px; background: #888; margin-left: 22px; display: flex; align-items: center; justify-content: center; }
.minus::after { content: ""; width: 20px; height: 3px; background: #fff; }
.dag-name { display: flex; align-items: center; gap: 18px; height: 44px; font-size: 28px; letter-spacing: .6px; }
.dag-name-a { margin-top: 14px; }
.dag-bar { width: 670px; height: 7px; border-radius: 3px; background: #1bd96a; margin-top: 14px; flex: none; }
.dag-count { width: 670px; height: 30px; margin-top: 11px; padding-left: 10px; display: flex; align-items: center; gap: 10px; font-size: 26px; flex: none; }
.group {
  margin-top: 52px;
  width: 683px; height: 861px;
  flex: none;
  border: 4px solid #6fa873;
  border-radius: 8px;
  display: flex; flex-direction: column; align-items: center;
}
.group-time { margin-top: 11px; }
.group-name { margin-top: 15px; }
.group-bar { width: 656px; margin-top: 13px; }
.group-count { width: 656px; margin-top: 10px; padding-left: 8px; }
.node {
  height: 126px; flex: none;
  background: #041f47;
  border: 4px solid #6fa873;
  border-radius: 8px;
  display: flex; flex-direction: column; align-items: center;
}
.node-a { width: 571px; margin-top: 54px; }
.node-b { width: 524px; }
.node-c { width: 549px; }
.node-time { display: flex; align-items: center; gap: 12px; height: 40px; margin-top: 11px; padding-left: 50px; font-size: 28px; }
.node-name { display: flex; align-items: center; gap: 18px; height: 44px; margin-top: 14px; font-size: 28px; letter-spacing: .55px; white-space: pre; }
.edge { width: 20px; height: 94px; flex: none; }

/* annotations laid over the screenshot */
.anno { position: absolute; left: 0; top: 0; pointer-events: none; }
.anno-lines path { stroke: #ff2600; stroke-width: 4; fill: none; }
.anno-heads path { fill: #ff2600; }
.anno-text { font-family: "Liberation Sans", Arial, sans-serif; font-size: 45px; fill: #ff2600; }
```
